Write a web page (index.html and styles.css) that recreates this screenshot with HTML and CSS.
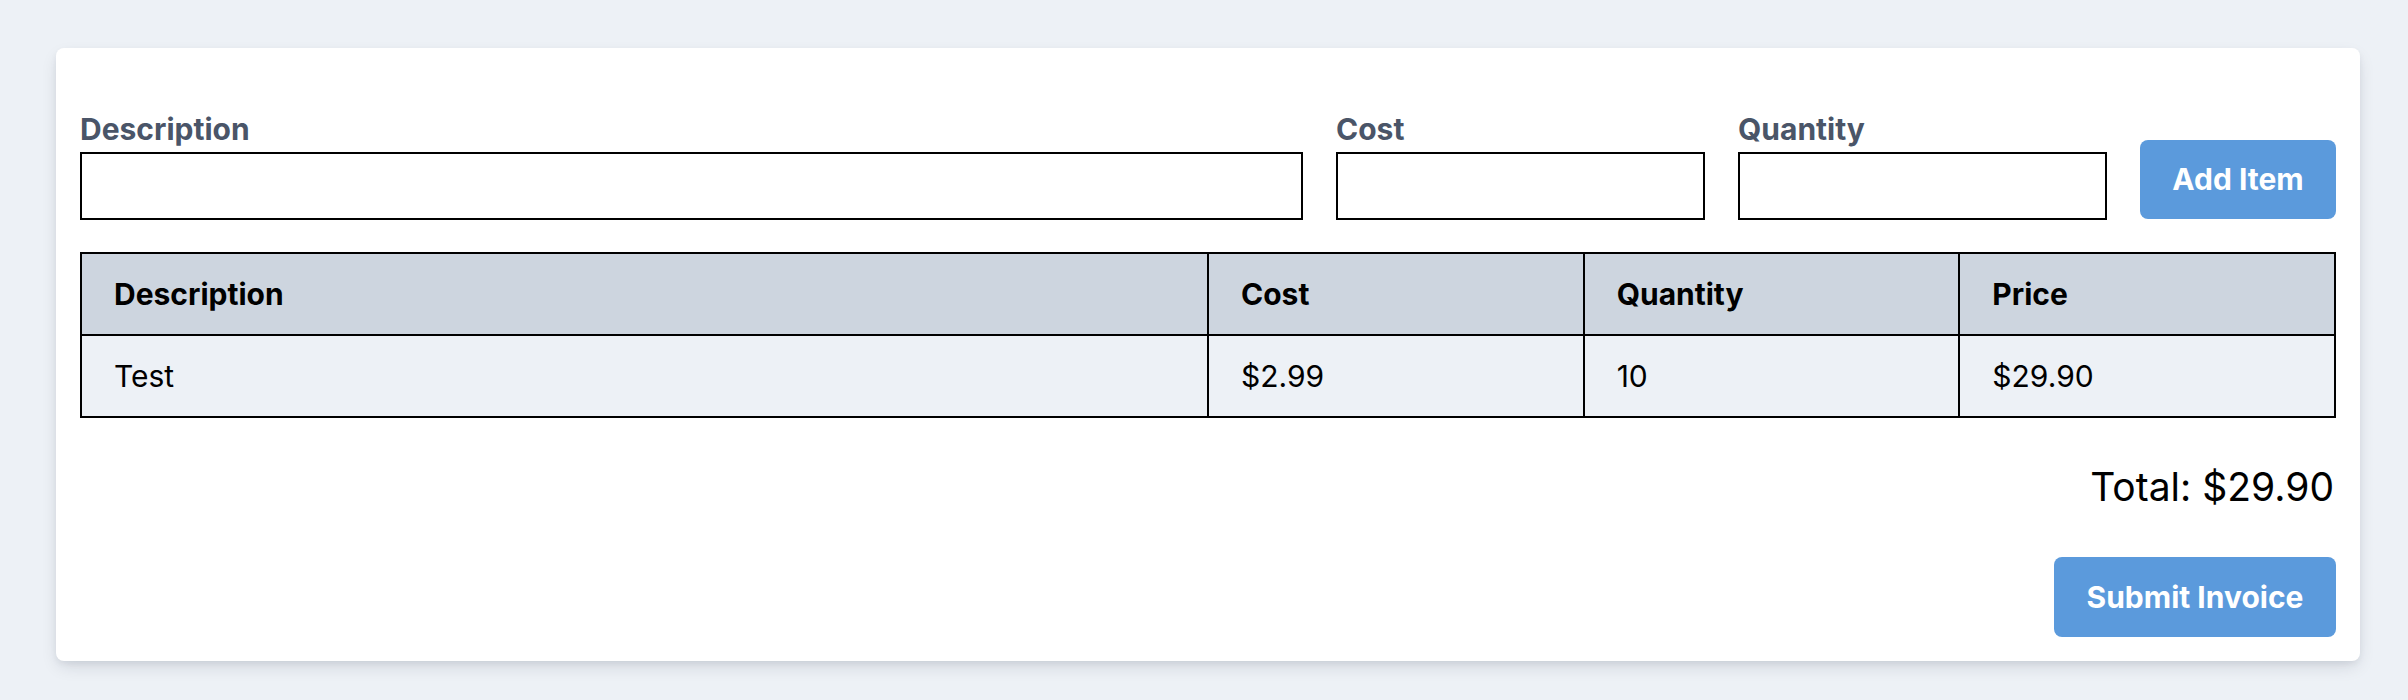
FILE: index.html
```html
<!DOCTYPE html>
<html lang="en">
<head>
<meta charset="utf-8">
<title>Invoice</title>
<link rel="stylesheet" href="styles.css">
</head>
<body>
  <main class="card">
    <form class="item-form">
      <div class="field field-desc">
        <label class="field-label" for="desc">Description</label>
        <input class="field-input" id="desc" type="text">
      </div>
      <div class="field field-small">
        <label class="field-label" for="cost">Cost</label>
        <input class="field-input" id="cost" type="text">
      </div>
      <div class="field field-small">
        <label class="field-label" for="qty">Quantity</label>
        <input class="field-input" id="qty" type="text">
      </div>
      <button class="btn" type="button">Add Item</button>
    </form>

    <table class="items">
      <thead>
        <tr>
          <th class="col-desc">Description</th>
          <th class="col-num">Cost</th>
          <th class="col-num">Quantity</th>
          <th class="col-num">Price</th>
        </tr>
      </thead>
      <tbody>
        <tr>
          <td>Test</td>
          <td>$2.99</td>
          <td>10</td>
          <td>$29.90</td>
        </tr>
      </tbody>
    </table>

    <div class="total">Total: $29.90</div>

    <div class="actions">
      <button class="btn" type="button">Submit Invoice</button>
    </div>
  </main>
</body>
</html>
```

FILE: styles.css
```css
* {
  box-sizing: border-box;
}

html, body {
  margin: 0;
}

body {
  background: #edf1f6;
  font-family: Inter, "Noto Sans", "Liberation Sans", sans-serif;
  padding: 48px 48px 38px 56px;
  color: #000;
}

.card {
  background: #ffffff;
  border-radius: 8px;
  padding: 24px;
  box-shadow: 0 7px 18px -3px rgba(20, 30, 50, 0.14), 0 3px 7px -1px rgba(20, 30, 50, 0.07);
}

.item-form {
  display: flex;
  align-items: flex-end;
  gap: 33px;
  padding-top: 35px;
}

.field {
  display: flex;
  flex-direction: column;
}

.field-desc {
  flex: 1;
}

.field-small {
  width: 369px;
}

.field-label {
  font-size: 30px;
  line-height: 45px;
  font-weight: 700;
  color: #4a5568;
}

.field-input {
  height: 68px;
  border: 2px solid #000;
  border-radius: 0;
  background: #fff;
  font: inherit;
  font-size: 30px;
  padding: 0 12px;
  outline: none;
}

.btn {
  background: #5b9adc;
  color: #fff;
  border: none;
  border-radius: 8px;
  font-family: inherit;
  font-size: 30px;
  font-weight: 700;
  line-height: 45px;
  padding: 17px 32px;
  cursor: pointer;
}

.item-form .btn {
  width: 196px;
  padding: 17px 0;
  margin-bottom: 1px;
}

.items {
  width: 100%;
  margin-top: 32px;
  border-collapse: collapse;
  border: 2px solid #000;
  table-layout: fixed;
}

.col-desc {
  width: 50%;
}

.items th,
.items td {
  border: 2px solid #000;
  text-align: left;
  font-size: 30px;
  line-height: 45px;
  padding: 17.5px 32px;
}

.items th {
  background: #cdd5df;
  font-weight: 700;
}

.items td {
  background: #edf1f6;
  font-weight: 400;
}

.total {
  margin-top: 40px;
  text-align: right;
  font-size: 39px;
  line-height: 58px;
  font-weight: 400;
  padding-right: 2px;
}

.actions {
  margin-top: 41px;
  display: flex;
  justify-content: flex-end;
}

.actions .btn {
  width: 282px;
  padding: 17.5px 0;
}
```
